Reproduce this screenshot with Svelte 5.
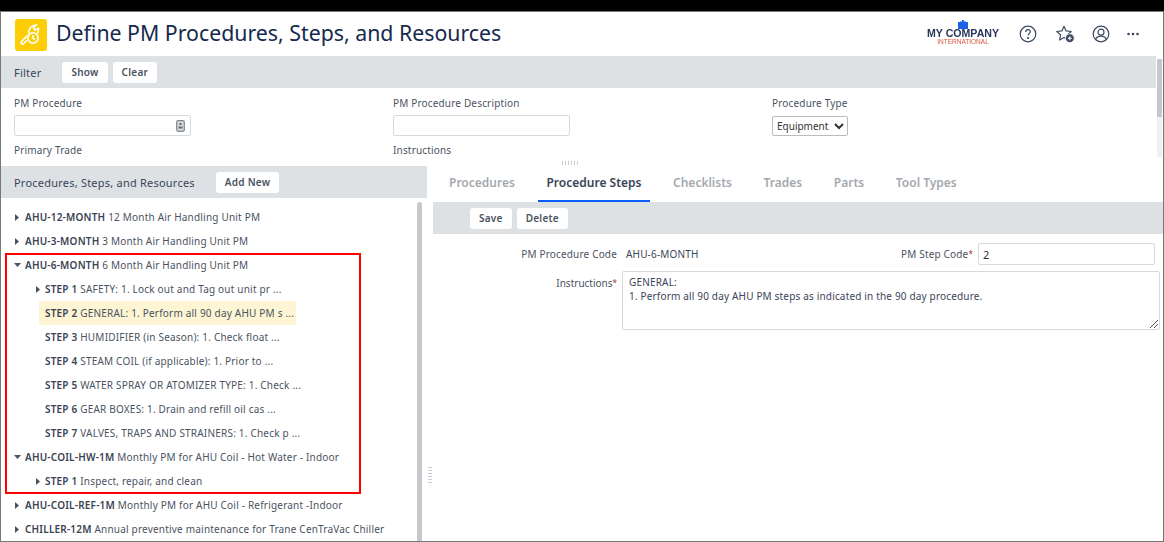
<script>
    const tabs = ["Procedures", "Procedure Steps", "Checklists", "Trades", "Parts", "Tool Types"];

    // level 0 = procedure, level 1 = step
    const rows = [
        { level: 0, arrow: "right", code: "AHU-12-MONTH", text: "12 Month Air Handling Unit PM" },
        { level: 0, arrow: "right", code: "AHU-3-MONTH", text: "3 Month Air Handling Unit PM" },
        { level: 0, arrow: "down", code: "AHU-6-MONTH", text: "6 Month Air Handling Unit PM" },
        { level: 1, arrow: "right", code: "STEP 1", text: "SAFETY: 1. Lock out and Tag out unit pr ..." },
        { level: 1, selected: true, code: "STEP 2", text: "GENERAL: 1. Perform all 90 day AHU PM s ..." },
        { level: 1, code: "STEP 3", text: "HUMIDIFIER (in Season): 1. Check float ..." },
        { level: 1, code: "STEP 4", text: "STEAM COIL (if applicable): 1. Prior to ..." },
        { level: 1, code: "STEP 5", text: "WATER SPRAY OR ATOMIZER TYPE: 1. Check ..." },
        { level: 1, code: "STEP 6", text: "GEAR BOXES: 1. Drain and refill oil cas ..." },
        { level: 1, code: "STEP 7", text: "VALVES, TRAPS AND STRAINERS: 1. Check p ..." },
        { level: 0, arrow: "down", code: "AHU-COIL-HW-1M", text: "Monthly PM for AHU Coil - Hot Water - Indoor" },
        { level: 1, arrow: "right", code: "STEP 1", text: "Inspect, repair, and clean" },
        { level: 0, arrow: "right", code: "AHU-COIL-REF-1M", text: "Monthly PM for AHU Coil - Refrigerant -Indoor" },
        { level: 0, arrow: "right", code: "CHILLER-12M", text: "Annual preventive maintenance for Trane CenTraVac Chiller" },
    ];
</script>

<div class="page">
    <div class="frame">
        <header>
            <div class="app-icon">
                <svg width="24" height="24" viewBox="0 0 24 24" fill="none" stroke="#fff" stroke-width="1.6">
                    <path d="M8.500 12.500L2.500 18.500c-.8.8-.6 1.500 0 2.100.7.600 1.400.7 2.100 0l3.400-3.400" />
                    <path d="M10 10.500c-1.200-3.800 1.800-8 7-8.500l-2.500 3 1.500 2 3.500-1.500c.3 1.800-.2 3.500-1.200 4.800" />
                    <circle cx="14" cy="15" r="5.200" />
                    <path d="M14 12v3.300l2 1.200" />
                </svg>
            </div>
            <h1>Define PM Procedures, Steps, and Resources</h1>
            <div class="logo">
                <svg class="tower" width="10" height="9" viewBox="0 0 10 9">
                    <path d="M0 2h2.500v-1h1v1h.5v-2h2v2h.5v-1h1v1h2.500v7h-10z" fill="#1c62e8" />
                </svg>
                <span class="logo-name">MY COMPANY</span>
                <span class="logo-sub">INTERNATIONAL</span>
            </div>
            <div class="head-icons">
                <svg class="help" width="18" height="18" viewBox="0 0 18 18" fill="none" stroke="#3c4a5e" stroke-width="1.200">
                    <circle cx="9" cy="9" r="7.800" />
                    <path d="M6.800 7c0-1.500 1-2.300 2.300-2.300s2.200.8 2.200 2c0 1.700-2.200 1.800-2.200 3.600" />
                    <circle cx="9.100" cy="13" r=".5" fill="#3c4a5e" />
                </svg>
                <svg width="19" height="18" viewBox="0 0 19 18" fill="none" stroke="#3c4a5e" stroke-width="1.200">
                    <path d="M8 1.200l2.100 4.700 5.100.6-3.800 3.500 1 5-4.400-2.600-4.400 2.600 1-5L.8 6.500l5.100-.6z" stroke-linejoin="round" />
                    <circle cx="13.800" cy="13.200" r="4.400" fill="#3c4a5e" stroke="#fff" stroke-width=".8" />
                    <path d="M11.800 13.200h4M13.800 11.200v4" stroke="#fff" stroke-width="1.100" />
                </svg>
                <svg width="18" height="18" viewBox="0 0 18 18" fill="none" stroke="#3c4a5e" stroke-width="1.200">
                    <circle cx="9" cy="9" r="7.800" />
                    <circle cx="9" cy="7.200" r="3" />
                    <path d="M3.600 14.500c.8-2.400 2.800-3.300 5.400-3.300s4.600.9 5.400 3.300" />
                </svg>
                <svg width="12" height="18" viewBox="0 0 12 18" fill="#3c4a5e">
                    <circle cx="1.500" cy="9" r="1.300" />
                    <circle cx="6" cy="9" r="1.300" />
                    <circle cx="10.500" cy="9" r="1.300" />
                </svg>
            </div>
        </header>

        <section class="filter-wrap">
            <div class="filter">
                <div class="bar filter-bar">
                    <span class="bar-title">Filter</span>
                    <button class="btn show">Show</button>
                    <button class="btn">Clear</button>
                </div>
                <div class="filter-grid">
                    <div class="field">
                        <span class="field-label">PM Procedure</span>
                        <div class="input lookup">
                            <svg width="9" height="12" viewBox="0 0 9 12">
                                <rect x=".7" y=".7" width="7.600" height="10.600" rx="1.500" fill="#d6d9dc" stroke="#80868c" stroke-width="1.200" />
                                <rect x="3.500" y="3" width="2" height="2" fill="#666" />
                                <rect x="2.500" y="6.500" width="4" height="2" fill="#666" />
                            </svg>
                        </div>
                    </div>
                    <div class="field">
                        <span class="field-label">PM Procedure Description</span>
                        <div class="input"></div>
                    </div>
                    <div class="field">
                        <span class="field-label">Procedure Type</span>
                        <select class="type-select">
                            <option>Equipment</option>
                        </select>
                    </div>
                    <span class="field-label">Primary Trade</span>
                    <span class="field-label">Instructions</span>
                </div>
            </div>
            <div class="page-scroll"><div class="page-thumb"></div></div>
            <div class="grip grip-h"></div>
        </section>

        <section class="split">
            <div class="left">
                <div class="bar tree-bar">
                    <span class="bar-title">Procedures, Steps, and Resources</span>
                    <button class="btn add">Add New</button>
                </div>
                <div class="tree-wrap">
                    <ul class="tree">
                        {#each rows as row}
                            <li class="row" class:step={row.level === 1} class:selected={row.selected}>
                                {#if row.arrow === "right"}
                                    <svg class="arrow" width="4" height="7" viewBox="0 0 4 7"><path d="M0 0l4 3.500-4 3.500z" fill="#4a525c" /></svg>
                                {:else if row.arrow === "down"}
                                    <svg class="arrow down" width="7" height="4" viewBox="0 0 7 4"><path d="M0 0h7l-3.500 4z" fill="#4a525c" /></svg>
                                {/if}
                                <span class="row-text"><b>{row.code}</b> {row.text}</span>
                            </li>
                        {/each}
                    </ul>
                    <div class="tree-scroll"></div>
                    <div class="red-box"></div>
                </div>
            </div>

            <div class="right">
                <nav class="tabs">
                    {#each tabs as tab, i}
                        <span class="tab" class:active={i === 1}>{tab}</span>
                    {/each}
                </nav>
                <div class="bar detail-bar">
                    <button class="btn save">Save</button>
                    <button class="btn del">Delete</button>
                </div>
                <div class="form">
                    <div class="form-row">
                        <span class="form-label">PM Procedure Code</span>
                        <span class="form-value">AHU-6-MONTH</span>
                        <span class="form-label step-label">PM Step Code<i>*</i></span>
                        <div class="input step-input">2</div>
                    </div>
                    <div class="form-row top">
                        <span class="form-label instr">Instructions<i>*</i></span>
                        <div class="input area">
                            GENERAL:<br />
                            1. Perform all 90 day AHU PM steps as indicated in the 90 day procedure.
                            <svg class="resize" width="9" height="9" viewBox="0 0 9 9" stroke="#555" stroke-width="1">
                                <path d="M1 9l8-8M5 9l4-4" />
                            </svg>
                        </div>
                    </div>
                </div>
                <div class="grip grip-v"></div>
            </div>
        </section>
    </div>
</div>

<style>
    :global(body) {
        margin: 0;
        background: #fff;
    }

    .page {
        height: 542px;
        padding-top: 11px;
        box-sizing: border-box;
        background: #000;
        overflow: hidden;
        font-family: "Noto Sans", "Open Sans", sans-serif;
        font-size: 10px;
        letter-spacing: .17px;
        color: #4a5361;
    }

    .frame {
        height: 531px;
        box-sizing: border-box;
        background: #fff;
        border: 1px solid #777;
        display: flex;
        flex-direction: column;
    }

    header {
        height: 44px;
        flex: none;
        display: flex;
        align-items: center;
        padding: 0 24px 0 14px;
    }

    .app-icon {
        width: 32px;
        height: 32px;
        margin-top: 1px;
        border-radius: 3px;
        background: #fdcd06;
        display: flex;
        align-items: center;
        justify-content: center;
    }

    h1 {
        margin: 0 0 4px 9px;
        font-size: 21.300px;
        font-weight: 400;
        letter-spacing: 0;
        color: #16294d;
        white-space: nowrap;
    }

    .logo {
        margin: 0 0 2px auto;
        width: 72px;
        display: flex;
        flex-direction: column;
        align-items: center;
        line-height: 1;
        letter-spacing: 0;
        font-family: "Liberation Sans", sans-serif;
        filter: blur(.3px);
    }

    .tower {
        margin-bottom: -1px;
    }

    .logo-name {
        font-size: 10.600px;
        font-weight: 700;
        color: #27375a;
        white-space: nowrap;
    }

    .logo-sub {
        font-size: 6.500px;
        color: #d9583c;
        white-space: nowrap;
    }

    .head-icons {
        margin-left: 20px;
        display: flex;
        align-items: center;
        gap: 17px;
    }

    .help {
        margin-right: 2px;
    }

    .filter-wrap {
        height: 110px;
        flex: none;
        display: flex;
        position: relative;
    }

    .filter {
        flex: 1;
    }

    .bar {
        background: #dde1e4;
        display: flex;
        align-items: center;
        box-sizing: border-box;
    }

    .filter-bar {
        height: 32px;
        padding-left: 13px;
    }

    .bar-title {
        font-size: 11px;
        letter-spacing: .22px;
        color: #3a4558;
    }

    .btn {
        font: inherit;
        font-size: 10px;
        font-weight: 600;
        letter-spacing: .25px;
        color: #4a5361;
        height: 21px;
        padding: 0 9px;
        background: #fff;
        border: none;
        border-radius: 3px;
    }

    .show {
        margin-left: 21px;
        margin-right: 5px;
    }

    .filter-grid {
        display: grid;
        grid-template-columns: 379px 379px 1fr;
        padding: 8px 0 0 13px;
    }

    .field {
        height: 47px;
        display: flex;
        flex-direction: column;
        align-items: flex-start;
    }

    .field-label {
        line-height: 14px;
        margin-bottom: 5px;
    }

    .input {
        box-sizing: border-box;
        width: 177px;
        height: 21px;
        background: #fff;
        border: 1px solid #d7dadd;
        border-radius: 2px;
    }

    .lookup {
        display: flex;
        align-items: center;
        justify-content: flex-end;
        padding-right: 5px;
    }

    .type-select {
        width: 76px;
        height: 20px;
        margin-top: 1px;
        font: inherit;
        font-size: 10px;
        color: #333;
        background: #fff;
        border: 1px solid #b8bcc0;
        border-radius: 2px;
    }

    .page-scroll {
        width: 5px;
        margin: 3px 1px 9px 1px;
        background: #eef0f1;
        flex: none;
    }

    .page-thumb {
        height: 58px;
        background: #c4c7cb;
    }

    .grip {
        position: absolute;
    }

    .grip-h {
        left: 561px;
        bottom: 1px;
        width: 17px;
        height: 4px;
        background: repeating-linear-gradient(90deg, #c9ccd0 0 1px, #fff 1px 3px);
    }

    .split {
        flex: 1;
        min-height: 0;
        display: flex;
    }

    .left {
        width: 426px;
        flex: none;
        display: flex;
        flex-direction: column;
    }

    .tree-bar {
        height: 32px;
        padding-left: 13px;
        flex: none;
    }

    .add {
        margin-left: 21px;
    }

    .tree-wrap {
        flex: 1;
        min-height: 0;
        position: relative;
        overflow: hidden;
    }

    .tree {
        margin: 0;
        padding: 7px 0 0 13px;
        list-style: none;
    }

    .row {
        height: 24px;
        padding-left: 11px;
        display: flex;
        align-items: center;
        position: relative;
        width: fit-content;
        white-space: nowrap;
        letter-spacing: .2px;
    }

    .row.step {
        margin-left: 25px;
        padding: 0 2px 0 6px;
    }

    .selected {
        background: #fdf5d3;
    }

    .arrow {
        position: absolute;
        left: 1px;
    }

    .arrow.down {
        left: 0;
    }

    .step .arrow {
        left: -3px;
    }

    .row-text b {
        font-weight: 600;
        color: #3a4352;
    }

    .tree-scroll {
        position: absolute;
        top: 4px;
        bottom: 0;
        left: 416px;
        width: 5px;
        border-radius: 3px 3px 0 0;
        background: #c6c8cc;
    }

    .red-box {
        position: absolute;
        left: 4px;
        top: 55px;
        width: 356px;
        height: 241px;
        box-sizing: border-box;
        border: 2px solid #f00;
    }

    .right {
        flex: 1;
        min-width: 0;
        display: flex;
        flex-direction: column;
        position: relative;
    }

    .tabs {
        height: 36px;
        flex: none;
        display: flex;
        gap: 14.600px;
        padding-left: 13.500px;
        font-size: 12px;
        font-weight: 600;
        letter-spacing: 0;
        color: #a4a9af;
    }

    .tab {
        height: 34px;
        padding: 0 8.500px;
        line-height: 34px;
        border-bottom: 2px solid transparent;
    }

    .tab.active {
        color: #3a4558;
        border-bottom-color: #0b5cff;
    }

    .detail-bar {
        height: 32px;
        flex: none;
        margin-left: 6px;
        padding-left: 37px;
    }

    .save {
        margin-right: 5px;
    }

    .form {
        margin-left: 6px;
        padding-top: 9px;
    }

    .form-row {
        display: flex;
        align-items: center;
        height: 22px;
    }

    .form-row.top {
        margin-top: 6px;
        height: 59px;
        align-items: flex-start;
    }

    .form-label {
        width: 184px;
        text-align: right;
        flex: none;
    }

    .form-label i {
        font-style: normal;
        font-size: 8px;
        vertical-align: 1px;
        color: #a0302a;
    }

    .form-value {
        margin-left: 9px;
        width: 210px;
        flex: none;
        color: #3a4558;
    }

    .step-label {
        width: 137px;
    }

    .step-input {
        margin-left: 5px;
        height: 22px;
        line-height: 21px;
        padding-left: 4px;
        font-size: 11px;
        color: #333;
    }

    .instr {
        line-height: 24px;
        letter-spacing: 0;
    }

    .area {
        position: relative;
        width: 538px;
        height: 59px;
        margin-left: 5px;
        padding: 4px 6px;
        line-height: 13.500px;
        color: #3a4558;
    }

    .resize {
        position: absolute;
        right: 1px;
        bottom: 1px;
    }

    .grip-v {
        left: 1px;
        top: 300px;
        width: 4px;
        height: 17px;
        background: repeating-linear-gradient(0deg, #c9ccd0 0 1px, #fff 1px 3px);
    }
</style>
